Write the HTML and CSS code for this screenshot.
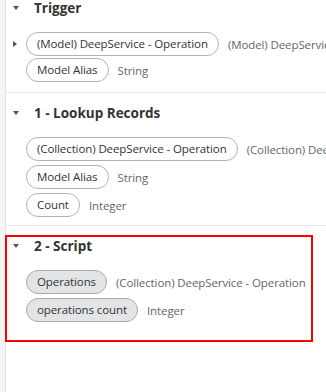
FILE: index.html
```html
<!DOCTYPE html>
<html lang="en">
<head>
    <meta charset="UTF-8">
    <meta name="viewport" content="width=device-width, initial-scale=1.0">
    <title>Flow Variables</title>
    <link rel="stylesheet" href="styles.css">
</head>
<body>
    <div class="panel">
        <div class="rail"></div>
        <div class="steps">
            <section class="step step-trigger">
                <div class="step-head">
                    <span class="caret"></span>
                    <h2 class="step-title">Trigger</h2>
                </div>
                <ul class="fields">
                    <li class="field field-nested">
                        <span class="expand"></span>
                        <span class="chip">(Model) DeepService - Operation</span>
                        <span class="type">(Model) DeepService - Operation</span>
                    </li>
                    <li class="field">
                        <span class="chip">Model Alias</span>
                        <span class="type">String</span>
                    </li>
                </ul>
            </section>

            <section class="step">
                <div class="step-head">
                    <span class="caret"></span>
                    <h2 class="step-title">1 - Lookup Records</h2>
                </div>
                <ul class="fields">
                    <li class="field">
                        <span class="chip">(Collection) DeepService - Operation</span>
                        <span class="type">(Collection) DeepService - Operation</span>
                    </li>
                    <li class="field">
                        <span class="chip">Model Alias</span>
                        <span class="type">String</span>
                    </li>
                    <li class="field">
                        <span class="chip">Count</span>
                        <span class="type">Integer</span>
                    </li>
                </ul>
            </section>

            <section class="step step-selected">
                <div class="highlight"></div>
                <div class="step-head">
                    <span class="caret"></span>
                    <h2 class="step-title">2 - Script</h2>
                </div>
                <ul class="fields">
                    <li class="field">
                        <span class="chip chip-output">Operations</span>
                        <span class="type">(Collection) DeepService - Operation</span>
                    </li>
                    <li class="field">
                        <span class="chip chip-output">operations count</span>
                        <span class="type">Integer</span>
                    </li>
                </ul>
            </section>
        </div>
    </div>
</body>
</html>
```

FILE: styles.css
```css
:root {
    --rail-bg: #f3f4f6;
    --rail-border: #e1e3e6;
    --divider: #e6e6e6;
    --text-dark: #333333;
    --text-muted: #666666;
    --chip-border: #b3b3b3;
    --chip-output-bg: #e2e4e6;
    --chip-output-border: #a8abae;
    --highlight: #ff0000;
}

body {
    margin: 0;
    font-family: 'Open Sans', 'Noto Sans', sans-serif;
    font-size: 11.5px;
    letter-spacing: -0.1px;
    color: var(--text-dark);
    background-color: #ffffff;
}

.panel {
    display: flex;
    height: 100vh;
    overflow: hidden;
}

.rail {
    flex: 0 0 5px;
    background-color: var(--rail-bg);
    border-right: 1px solid var(--rail-border);
}

.steps {
    flex: 1;
    min-width: 0;
}

.step {
    position: relative;
    border-bottom: 1px solid var(--divider);
}

.step-trigger {
    margin-top: -12px;
}

.step-trigger .fields {
    gap: 2px;
    padding-bottom: 10px;
}

.step-selected {
    border-bottom: none;
}

.step-head {
    display: flex;
    align-items: center;
    height: 40px;
    padding-left: 7px;
}

.caret {
    width: 0;
    height: 0;
    border-left: 3.5px solid transparent;
    border-right: 3.5px solid transparent;
    border-top: 4px solid #555555;
    margin-right: 15px;
}

.step-title {
    margin: 0;
    font-size: 13.5px;
    font-weight: 700;
    letter-spacing: 0;
    color: var(--text-dark);
}

.fields {
    display: flex;
    flex-direction: column;
    gap: 4px;
    list-style: none;
    margin: 0;
    padding: 4px 0 8px 20px;
}

.field {
    display: flex;
    align-items: center;
    height: 24px;
    white-space: nowrap;
}

.field-nested {
    margin-left: -13px;
}

.expand {
    width: 0;
    height: 0;
    border-top: 3px solid transparent;
    border-bottom: 3px solid transparent;
    border-left: 4px solid #555555;
    margin-right: 9px;
}

.chip {
    box-sizing: border-box;
    height: 24px;
    line-height: 22px;
    padding: 0 10px;
    border: 1px solid var(--chip-border);
    border-radius: 12px;
    background-color: #ffffff;
    color: var(--text-dark);
}

.chip-output {
    background-color: var(--chip-output-bg);
    border-color: var(--chip-output-border);
}

.type {
    margin-left: 9px;
    color: var(--text-muted);
}

.highlight {
    position: absolute;
    top: 9px;
    left: -1px;
    width: 308px;
    height: 107px;
    box-sizing: border-box;
    border: 2px solid var(--highlight);
    pointer-events: none;
}
```
